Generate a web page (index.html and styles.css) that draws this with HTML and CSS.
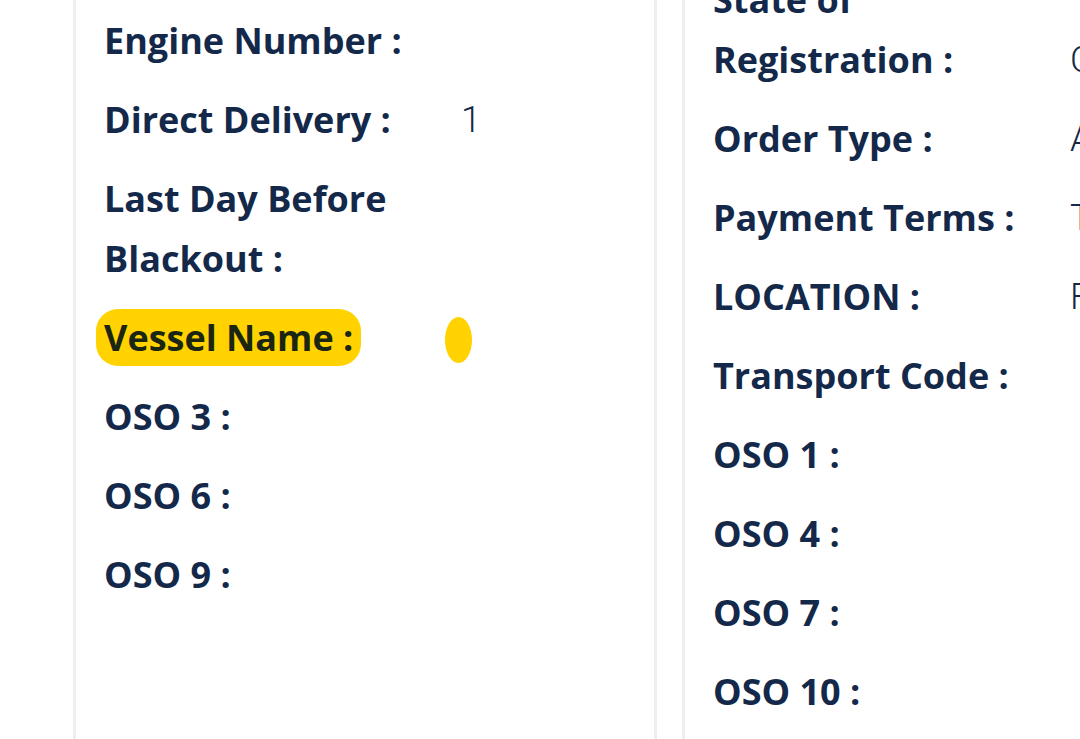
FILE: index.html
```html
<!DOCTYPE html>
<html lang="en">
<head>
<meta charset="utf-8">
<title>Order details</title>
<link rel="stylesheet" href="styles.css">
</head>
<body>
<div class="page">
  <section class="card card-left">
    <div class="rows">
      <div class="row"><div class="label">Engine Number :</div><div class="value"></div></div>
      <div class="row"><div class="label">Direct Delivery :</div><div class="value">1</div></div>
      <div class="row"><div class="label">Last Day Before Blackout :</div><div class="value"></div></div>
      <div class="row"><div class="label"><span class="hl">Vessel Name :</span></div><div class="value"><span class="hl-dot"></span></div></div>
      <div class="row"><div class="label">OSO 3 :</div><div class="value"></div></div>
      <div class="row"><div class="label">OSO 6 :</div><div class="value"></div></div>
      <div class="row"><div class="label">OSO 9 :</div><div class="value"></div></div>
    </div>
  </section>
  <section class="card card-right">
    <div class="rows">
      <div class="row"><div class="label">State of Registration :</div><div class="value">C</div></div>
      <div class="row"><div class="label">Order Type :</div><div class="value">A</div></div>
      <div class="row"><div class="label">Payment Terms :</div><div class="value">T</div></div>
      <div class="row"><div class="label">LOCATION :</div><div class="value">F</div></div>
      <div class="row"><div class="label">Transport Code :</div><div class="value"></div></div>
      <div class="row"><div class="label">OSO 1 :</div><div class="value"></div></div>
      <div class="row"><div class="label">OSO 4 :</div><div class="value"></div></div>
      <div class="row"><div class="label">OSO 7 :</div><div class="value"></div></div>
      <div class="row"><div class="label">OSO 10 :</div><div class="value"></div></div>
    </div>
  </section>
</div>
</body>
</html>
```
FILE: styles.css
```css
html, body {
  margin: 0;
  padding: 0;
  background: #ffffff;
  overflow: hidden;
}
body {
  font-family: "Open Sans", Roboto, "Liberation Sans", sans-serif;
  color: #14294a;
  width: 1080px;
  height: 739px;
}
.page {
  display: flex;
  gap: 25px;
  padding-left: 73px;
  height: 800px;
}
.card {
  flex: none;
  background: #fff;
  box-sizing: border-box;
  height: 900px;
}
.card-left {
  width: 584px;
  border-left: 3px solid #eeeeee;
  border-right: 3px solid #eeeeee;
  padding: 11px 0 0 28px;
}
.card-right {
  width: 600px;
  border-left: 3px solid #eeeeee;
  margin-top: -30px;
  padding: 0 0 0 28px;
}
.rows {
  display: flex;
  flex-direction: column;
  gap: 19px;
}
.row {
  display: grid;
  grid-template-columns: 357px 1fr;
  font-size: 36px;
  line-height: 60px;
}
.label {
  font-weight: 700;
  letter-spacing: 0;
  padding-right: 20px;
}
.value {
  align-self: end;
  font-family: Roboto, "Open Sans", sans-serif;
  font-weight: 300;
  font-size: 36px;
  white-space: nowrap;
}
.hl {
  background: #ffd200;
  color: #1a2612;
  border-radius: 22px;
  padding: 4px 8px;
  margin-left: -8px;
}
.hl-dot {
  display: inline-block;
  width: 27px;
  height: 46px;
  border-radius: 50%;
  background: #ffd200;
  margin-left: -16px;
  vertical-align: middle;
}
```
